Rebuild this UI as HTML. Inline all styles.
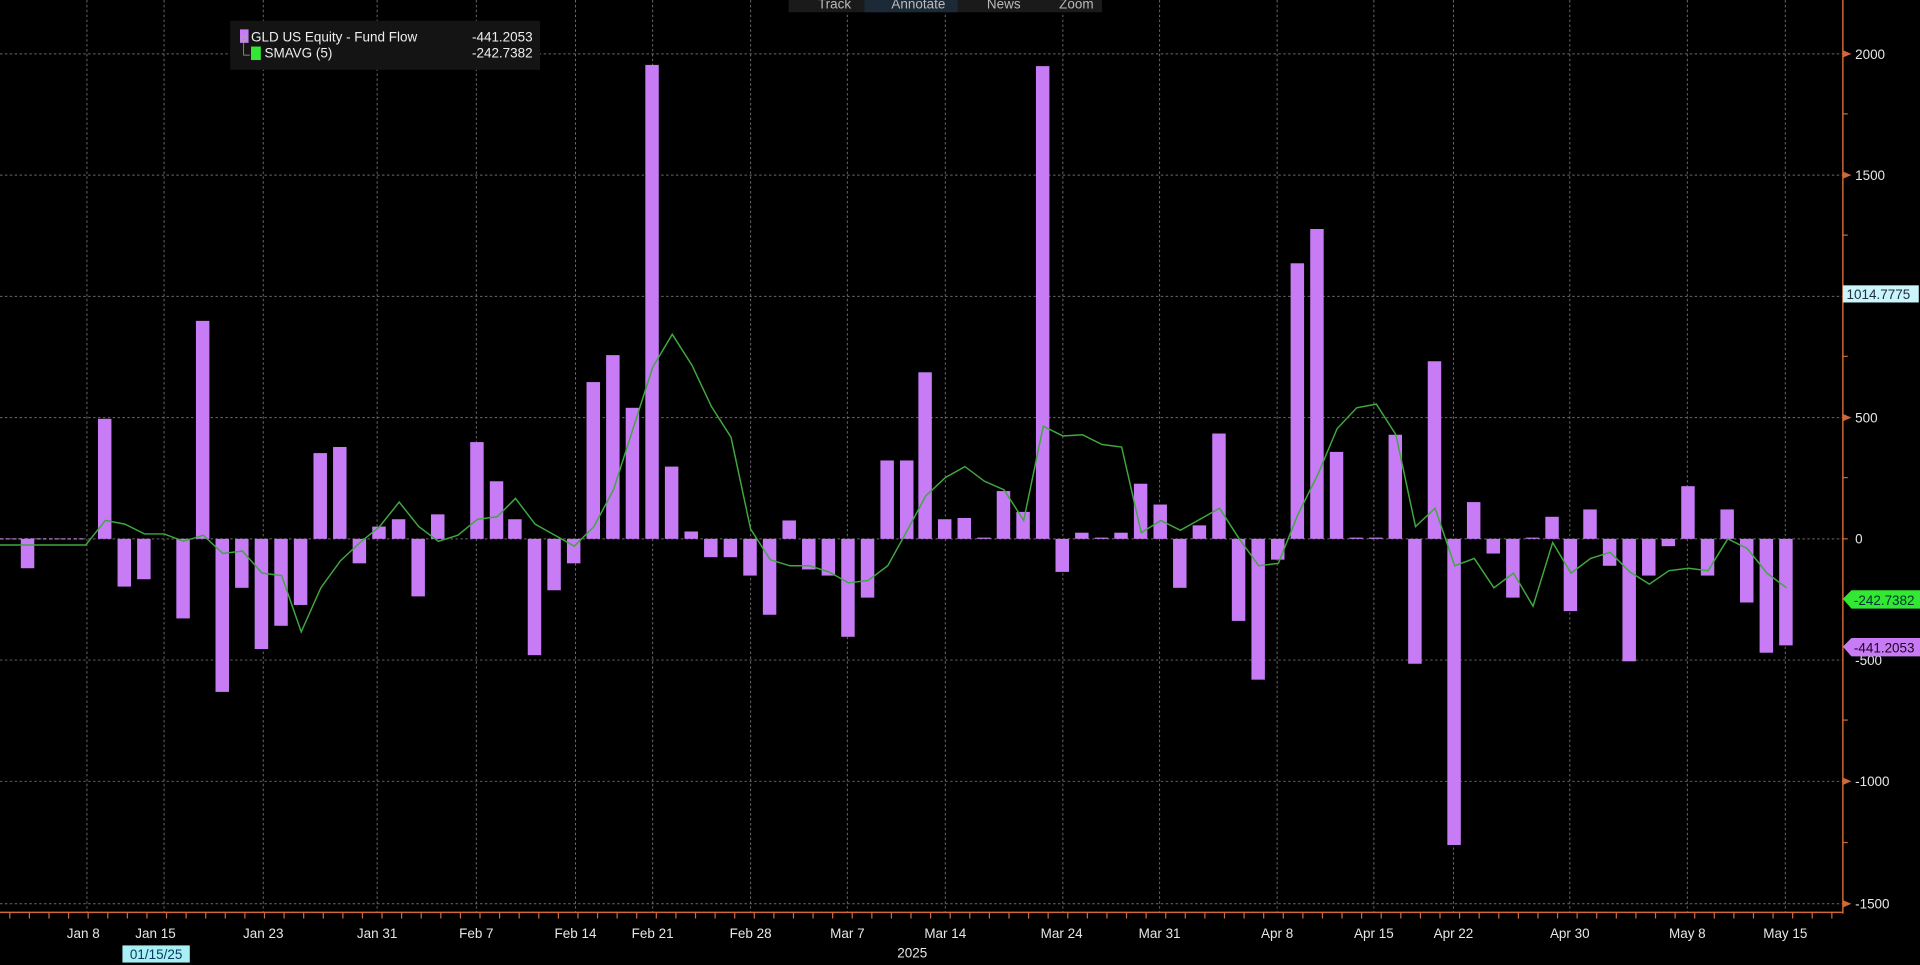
<!DOCTYPE html>
<html><head><meta charset="utf-8"><style>
html,body{margin:0;padding:0;background:#000;overflow:hidden}
svg{display:block}
text{font-family:"Liberation Sans",sans-serif}
</style></head><body>
<svg width="1920" height="965" viewBox="0 0 1568 788" preserveAspectRatio="none">
<rect width="1568" height="788" fill="#000"/>
<g stroke="#6a6a6a" stroke-width="0.8" stroke-dasharray="2,2">
<line x1="0" y1="44" x2="1505" y2="44"/><line x1="0" y1="143" x2="1505" y2="143"/><line x1="0" y1="242" x2="1505" y2="242"/><line x1="0" y1="341" x2="1505" y2="341"/><line x1="0" y1="440" x2="1505" y2="440"/><line x1="0" y1="539" x2="1505" y2="539"/><line x1="0" y1="638" x2="1505" y2="638"/><line x1="0" y1="738" x2="1505" y2="738"/>
<line x1="71" y1="0" x2="71" y2="745"/><line x1="134" y1="0" x2="134" y2="745"/><line x1="215" y1="0" x2="215" y2="745"/><line x1="308" y1="0" x2="308" y2="745"/><line x1="389" y1="0" x2="389" y2="745"/><line x1="470" y1="0" x2="470" y2="745"/><line x1="533" y1="0" x2="533" y2="745"/><line x1="613" y1="0" x2="613" y2="745"/><line x1="692" y1="0" x2="692" y2="745"/><line x1="772" y1="0" x2="772" y2="745"/><line x1="868" y1="0" x2="868" y2="745"/><line x1="947" y1="0" x2="947" y2="745"/><line x1="1043" y1="0" x2="1043" y2="745"/><line x1="1122" y1="0" x2="1122" y2="745"/><line x1="1187" y1="0" x2="1187" y2="745"/><line x1="1282" y1="0" x2="1282" y2="745"/><line x1="1378" y1="0" x2="1378" y2="745"/><line x1="1458" y1="0" x2="1458" y2="745"/>
</g>
<line x1="0" y1="440" x2="70" y2="440" stroke="#b07ad0" stroke-width="1" stroke-dasharray="3,2"/>
<g fill="#c77cf5" id="bars"></g>
<polyline id="sma" fill="none" stroke="#3fa83f" stroke-width="1.2" points="0,445 70,445 86,425 102,428 118,436 134,436 150,442 166,437 182,452 198,450 214,468 230,470 246,516 262,480 278,458 294,443 310,430 326,410 342,430 358,442 374,437 390,424 406,422 421,407 437,428 453,437 469,446 485,430 501,400 517,350 533,300 549,273 565,298 581,332 597,357 613,432 629,457 645,462 661,462 677,467 693,476 709,474 725,462 741,433 756,405 772,390 788,381 804,393 820,400 836,425 852,348 868,356 884,355 900,363 916,365 932,435 948,425 964,433 980,424 996,415 1012,440 1028,462 1044,460 1060,420 1076,388 1092,350 1108,333 1124,330 1140,355 1156,430 1172,415 1188,462 1204,456 1220,480 1236,468 1252,495 1268,443 1283,468 1299,456 1315,451 1331,467 1347,477 1363,466 1379,464 1395,466 1411,440 1427,448 1443,468 1459,480"/>
<!-- axes -->
<line x1="1505" y1="0" x2="1505" y2="746" stroke="#d0683a" stroke-width="1.2"/>
<line x1="0" y1="745" x2="1505" y2="745" stroke="#d0683a" stroke-width="1.2"/>
<g fill="#d0683a">
<polygon points="1505,41 1512,44 1505,47"/><polygon points="1505,140 1512,143 1505,146"/><polygon points="1505,338 1512,341 1505,344"/><polygon points="1505,635 1512,638 1505,641"/><polygon points="1505,735 1512,738 1505,741"/>
</g>
<g stroke="#d0683a" stroke-width="1">
<line x1="1505" y1="93" x2="1509" y2="93"/><line x1="1505" y1="192" x2="1509" y2="192"/><line x1="1505" y1="291" x2="1509" y2="291"/><line x1="1505" y1="390" x2="1509" y2="390"/><line x1="1505" y1="440" x2="1509" y2="440"/><line x1="1505" y1="489" x2="1509" y2="489"/><line x1="1505" y1="588" x2="1509" y2="588"/><line x1="1505" y1="688" x2="1509" y2="688"/>
</g>
<g id="xt" stroke="#d0683a" stroke-width="1"></g>
<g fill="#e6e6e6" font-size="11">
<text x="1515" y="48">2000</text><text x="1515" y="147">1500</text><text x="1515" y="345">500</text><text x="1515" y="444">0</text><text x="1515" y="543">-500</text><text x="1515" y="642">-1000</text><text x="1515" y="742">-1500</text>
</g>
<g fill="#e6e6e6" font-size="11" text-anchor="middle">
<text x="68" y="766">Jan 8</text><text x="127" y="766">Jan 15</text><text x="215" y="766">Jan 23</text><text x="308" y="766">Jan 31</text><text x="389" y="766">Feb 7</text><text x="470" y="766">Feb 14</text><text x="533" y="766">Feb 21</text><text x="613" y="766">Feb 28</text><text x="692" y="766">Mar 7</text><text x="772" y="766">Mar 14</text><text x="867" y="766">Mar 24</text><text x="947" y="766">Mar 31</text><text x="1043" y="766">Apr 8</text><text x="1122" y="766">Apr 15</text><text x="1187" y="766">Apr 22</text><text x="1282" y="766">Apr 30</text><text x="1378" y="766">May 8</text><text x="1458" y="766">May 15</text>
<text x="745" y="782">2025</text>
</g>
<rect x="100" y="772" width="55" height="14" fill="#a8f0f4"/>
<text x="127.5" y="783" font-size="11" fill="#0a3a60" text-anchor="middle">01/15/25</text>
<!-- right labels -->
<rect x="1505" y="233" width="62" height="14" fill="#c9f5fb"/>
<text x="1508" y="244" font-size="11" fill="#203040">1014.7775</text>
<polygon points="1505,489 1512,482 1568,482 1568,497 1512,497" fill="#33e833"/>
<text x="1514" y="494" font-size="11" fill="#033">-242.7382</text>
<polygon points="1505,528 1512,521 1568,521 1568,536 1512,536" fill="#c77cf5"/>
<text x="1514" y="533" font-size="11" fill="#202">-441.2053</text>
<!-- legend -->
<rect x="188" y="17" width="253" height="40" fill="#141414"/>
<rect x="196" y="24" width="7" height="11" fill="#c77cf5"/>
<rect x="205" y="38" width="8" height="11" fill="#33e833"/>
<rect x="197" y="30" width="4" height="3" fill="none" stroke="#aaa" stroke-width="0.6"/>
<polyline points="199,33 199,45 204,45" fill="none" stroke="#aaa" stroke-width="0.6"/>
<g font-size="11" fill="#eee">
<text x="205" y="34">GLD US Equity - Fund Flow</text><text x="435" y="34" text-anchor="end">-441.2053</text>
<text x="216" y="47">SMAVG (5)</text><text x="435" y="47" text-anchor="end">-242.7382</text>
</g>
<!-- toolbar -->
<rect x="644" y="0" width="256" height="10" fill="#1a1a1a"/>
<rect x="706" y="0" width="76" height="10" fill="#1c2a38"/>
<g font-size="11" fill="#bbb"><text x="668" y="7">Track</text><text x="728" y="7">Annotate</text><text x="806" y="7">News</text><text x="865" y="7">Zoom</text></g>
<script>
var bars=[[23,464],[86,342],[102,479],[118,473],[150,505],[166,262],[182,565],[198,480],[214,530],[230,511],[246,494],[262,370],[278,365],[294,460],[310,430],[326,424],[342,487],[358,420],[390,361],[406,393],[421,424],[437,535],[453,482],[469,460],[485,312],[501,290],[517,333],[533,53],[549,381],[565,434],[581,455],[597,455],[613,470],[629,502],[645,425],[661,465],[677,470],[693,520],[709,488],[725,376],[741,376],[756,304],[772,424],[788,423],[804,439],[820,401],[836,418],[852,54],[868,467],[884,435],[900,439],[916,435],[932,395],[948,412],[964,480],[980,429],[996,354],[1012,507],[1028,555],[1044,457],[1060,215],[1076,187],[1092,369],[1108,439],[1124,439],[1140,355],[1156,542],[1172,295],[1188,690],[1204,410],[1220,452],[1236,488],[1252,439],[1268,422],[1283,499],[1299,416],[1315,462],[1331,540],[1347,470],[1363,446],[1379,397],[1395,470],[1411,416],[1427,492],[1443,533],[1459,527]];
var g=document.getElementById('bars'),ns='http://www.w3.org/2000/svg';
bars.forEach(function(b){var r=document.createElementNS(ns,'rect');var y0=Math.min(440,b[1]),h=Math.max(1,Math.abs(440-b[1]));r.setAttribute('x',b[0]-6);r.setAttribute('y',y0);r.setAttribute('width',11);r.setAttribute('height',h);g.appendChild(r);});
var t=document.getElementById('xt');for(var x=8;x<1505;x+=16){var l=document.createElementNS(ns,'line');l.setAttribute('x1',x);l.setAttribute('x2',x);l.setAttribute('y1',745);l.setAttribute('y2',750);t.appendChild(l);}
</script>
</svg>
</body></html>
